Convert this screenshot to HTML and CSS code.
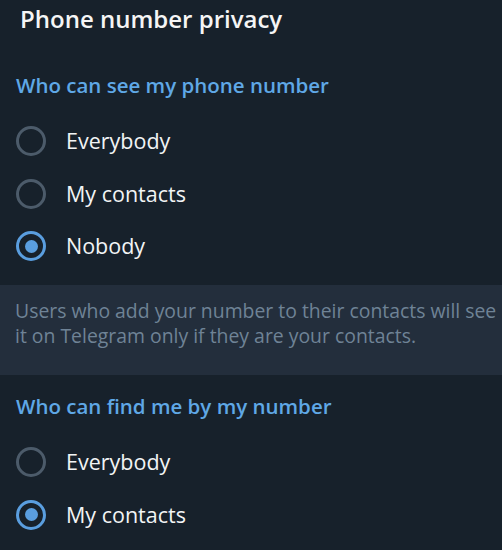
FILE: index.html
```html
<!DOCTYPE html>
<html>
<head>
<meta charset="utf-8">
<link rel="stylesheet" href="styles.css">
</head>
<body>
<div class="page">
  <div class="title">Phone number privacy</div>
  <div class="section first">
    <div class="header">Who can see my phone number</div>
    <div class="options">
      <div class="option"><span class="radio"></span><span class="label">Everybody</span></div>
      <div class="option"><span class="radio"></span><span class="label">My contacts</span></div>
      <div class="option"><span class="radio checked"></span><span class="label">Nobody</span></div>
    </div>
  </div>
  <div class="about">Users who add your number to their contacts will see it on Telegram only if they are your contacts.</div>
  <div class="section second">
    <div class="header">Who can find me by my number</div>
    <div class="options">
      <div class="option"><span class="radio"></span><span class="label">Everybody</span></div>
      <div class="option"><span class="radio checked"></span><span class="label">My contacts</span></div>
    </div>
  </div>
</div>
</body>
</html>
```

FILE: styles.css
```css
html, body {
  margin: 0;
  padding: 0;
  background: #17212b;
}
.page {
  width: 502px;
  height: 550px;
  overflow: hidden;
  font-family: "Open Sans", "Noto Sans", sans-serif;
  background: #17212b;
}
.title {
  padding: 3px 0 0 20px;
  font-size: 24px;
  line-height: 32px;
  font-weight: 600;
  color: #f5f5f5;
}
.section.first {
  margin-top: 36px;
}
.section.second {
  margin-top: 17px;
}
.header {
  padding-left: 16px;
  font-size: 20.5px;
  line-height: 28px;
  font-weight: 600;
  color: #5fa8e6;
}
.options {
  display: flex;
  flex-direction: column;
  margin-top: 16px;
}
.second .options {
  margin-top: 16px;
}
.option {
  display: flex;
  align-items: center;
  height: 52.5px;
  padding-left: 16px;
}
.radio {
  box-sizing: border-box;
  width: 30px;
  height: 30px;
  border: 3px solid #4c5b6a;
  border-radius: 50%;
  display: flex;
  align-items: center;
  justify-content: center;
  flex: none;
}
.radio.checked {
  border-color: #5a9edf;
}
.radio.checked::after {
  content: "";
  width: 13px;
  height: 13px;
  border-radius: 50%;
  background: #5a9edf;
}
.label {
  margin-left: 20px;
  font-size: 21.5px;
  line-height: 28px;
  color: #f2f4f5;
}
.about {
  margin-top: 12.5px;
  box-sizing: border-box;
  height: 90px;
  padding: 13px 0 0 15px;
  background: #232e3c;
  font-size: 19.4px;
  line-height: 25px;
  color: #6f8396;
}
```
